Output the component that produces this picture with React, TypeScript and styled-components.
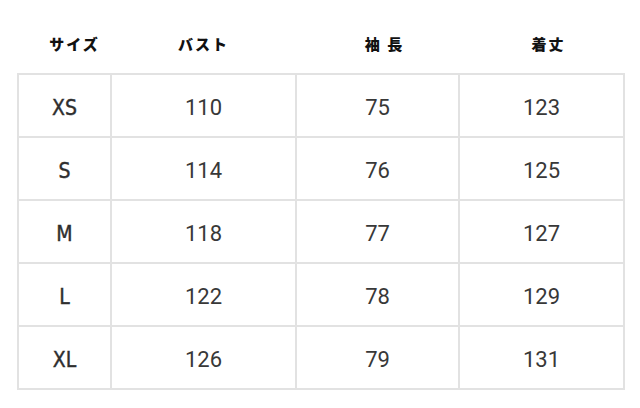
import React from "react"
import styled, { createGlobalStyle } from "styled-components";

const GlobalStyle = createGlobalStyle`
  html, body {
    margin: 0;
    padding: 0;
    background: #ffffff;
  }
`

const Page = styled.div`
  width: 640px;
  height: 408px;
  padding: 0 0 0 17px;
  box-sizing: border-box;
`

const Table = styled.table`
  width: 606px;
  border-collapse: collapse;
  table-layout: fixed;
`

const HeadCell = styled.th<{ shift: number }>`
  height: 74px;
  padding: 14px 0 0 ${ ({shift}) => shift * 2 }px;
  box-sizing: border-box;
  font-family: "Noto Sans CJK JP", sans-serif;
  font-size: 15px;
  font-weight: 900;
  letter-spacing: 2px;
  color: #111;
  text-align: center;
`

const Cell = styled.td`
  height: 63px;
  padding: 4px 0 0;
  box-sizing: border-box;
  border: 2px solid #e2e2e2;
  font-family: Roboto, "Liberation Sans", sans-serif;
  font-size: 22px;
  color: #383838;
  text-align: center;
`

const SizeCell = styled(Cell)`
  font-family: "DejaVu Sans Condensed", "Liberation Sans Narrow", sans-serif;
  font-size: 21px;
  color: #2e2e2e;
  -webkit-text-stroke: 0.4px #2e2e2e;
`

const columns = [
  {title: "サイズ", width: 93, shift: 10},
  {title: "バスト", width: 185, shift: 0},
  {title: "袖 長", width: 163, shift: 7},
  {title: "着丈", width: 165, shift: 7},
]

const rows = [
  ["XS", "110", "75", "123"],
  ["S", "114", "76", "125"],
  ["M", "118", "77", "127"],
  ["L", "122", "78", "129"],
  ["XL", "126", "79", "131"],
]

export default function App() {
  return <Page>
    <GlobalStyle/>
    <Table>
      <colgroup>
        { columns.map(c => <col key={ c.title } style={ {width: c.width} }/>) }
      </colgroup>
      <thead>
        <tr>
          { columns.map(c => <HeadCell key={ c.title } shift={ c.shift }>{ c.title }</HeadCell>) }
        </tr>
      </thead>
      <tbody>
        { rows.map(r => <tr key={ r[0] }>
          <SizeCell>{ r[0] }</SizeCell>
          { r.slice(1).map((v, i) => <Cell key={ i }>{ v }</Cell>) }
        </tr>) }
      </tbody>
    </Table>
  </Page>
}
